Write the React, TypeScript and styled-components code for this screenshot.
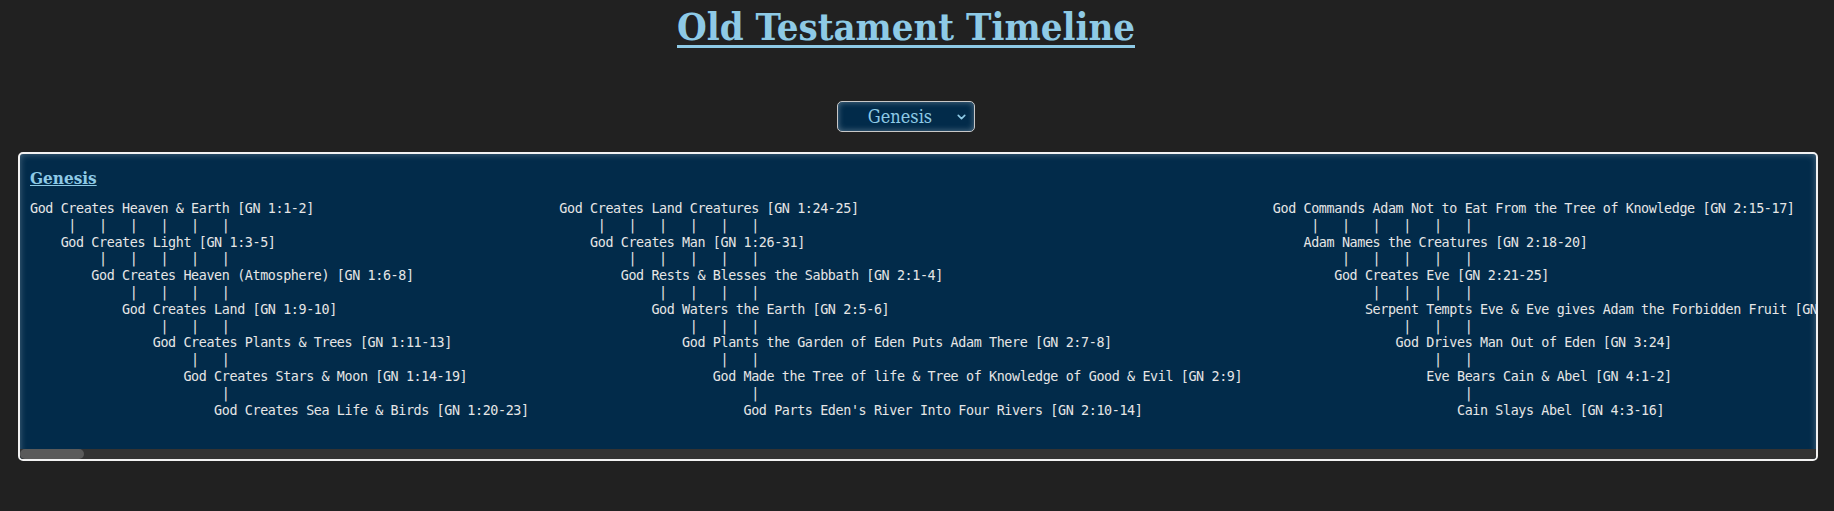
import styled, { createGlobalStyle } from 'styled-components'
import { ChevronDown } from 'lucide-react'

const GlobalStyle = createGlobalStyle`
  body {
    margin: 0;
    background: #212121;
  }
`

const books = ['Genesis', 'Exodus', 'Leviticus', 'Numbers', 'Deuteronomy']

// each column is one branch of the timeline, read top-down
const columns: string[][] = [
  [
    'God Creates Heaven & Earth [GN 1:1-2]',
    'God Creates Light [GN 1:3-5]',
    'God Creates Heaven (Atmosphere) [GN 1:6-8]',
    'God Creates Land [GN 1:9-10]',
    'God Creates Plants & Trees [GN 1:11-13]',
    'God Creates Stars & Moon [GN 1:14-19]',
    'God Creates Sea Life & Birds [GN 1:20-23]',
  ],
  [
    'God Creates Land Creatures [GN 1:24-25]',
    'God Creates Man [GN 1:26-31]',
    'God Rests & Blesses the Sabbath [GN 2:1-4]',
    'God Waters the Earth [GN 2:5-6]',
    'God Plants the Garden of Eden Puts Adam There [GN 2:7-8]',
    'God Made the Tree of life & Tree of Knowledge of Good & Evil [GN 2:9]',
    "God Parts Eden's River Into Four Rivers [GN 2:10-14]",
  ],
  [
    'God Commands Adam Not to Eat From the Tree of Knowledge [GN 2:15-17]',
    'Adam Names the Creatures [GN 2:18-20]',
    'God Creates Eve [GN 2:21-25]',
    'Serpent Tempts Eve & Eve gives Adam the Forbidden Fruit [GN 3:1-7]',
    'God Drives Man Out of Eden [GN 3:24]',
    'Eve Bears Cain & Abel [GN 4:1-2]',
    'Cain Slays Abel [GN 4:3-16]',
  ],
  [
    'Seth Is Born [GN 4:25-26]',
    'Generations From Adam to Noah [GN 5:1-32]',
    'God Sees the Wickedness of Man [GN 6:1-7]',
    'Noah Finds Grace [GN 6:8-10]',
    'God Commands Noah to Build the Ark [GN 6:11-22]',
    'The Flood [GN 7:1-24]',
    'The Waters Recede [GN 8:1-19]',
  ],
]

const visibleShare = 1 / 28

const STEP = 4

const buildLines = (events: string[]) => {
  const lines: string[] = []
  events.forEach((event, i) => {
    lines.push(' '.repeat(i * STEP) + event)
    const left = events.length - 1 - i
    if (left > 0) {
      lines.push(' '.repeat(i * STEP + 5) + Array(left).fill('|').join('   '))
    }
  })
  return lines
}

export default function App() {
  return (
    <>
      <GlobalStyle />
      <Header>
        <Title>Old Testament Timeline</Title>
        <Picker>
          <BookSelect defaultValue="Genesis">
            {books.map(book => (
              <option key={book}>{book}</option>
            ))}
          </BookSelect>
          <Chevron size={13} strokeWidth={3} />
        </Picker>
      </Header>
      <Panel>
        <Viewport>
          <BookHeading>Genesis</BookHeading>
          <Track>
            {columns.map((events, i) => (
              <Column key={i}>
                {buildLines(events).map((line, j) => (
                  <Line key={j}>{line}</Line>
                ))}
              </Column>
            ))}
          </Track>
        </Viewport>
        <ScrollBar>
          <Thumb style={{ width: `${visibleShare * 100}%` }} />
        </ScrollBar>
      </Panel>
    </>
  )
}

const serif = "'DejaVu Serif Condensed', 'DejaVu Serif', serif"

const Header = styled.header`
  display: flex;
  flex-direction: column;
  align-items: center;
  padding-right: 22px;
`

const Title = styled.h1`
  margin: 0;
  padding-top: 4px;
  font-family: ${serif};
  font-size: 38px;
  line-height: 45px;
  font-weight: bold;
  color: #8ecae6;
  text-decoration: underline;
  text-decoration-thickness: 3px;
  text-underline-offset: 5px;
`

const Picker = styled.div`
  position: relative;
  width: 138px;
  height: 31px;
  margin-top: 52px;
`

const BookSelect = styled.select`
  appearance: none;
  width: 100%;
  height: 100%;
  padding: 0 12px 0 0;
  border: 1px solid #c8c8c8;
  border-radius: 5px;
  background: #022b4a;
  box-shadow: inset 0 0 6px rgba(255, 255, 255, 0.35);
  color: #8ecae6;
  font-family: ${serif};
  font-size: 18px;
  text-align: center;
  text-align-last: center;
  outline: none;
`

const Chevron = styled(ChevronDown)`
  position: absolute;
  right: 7px;
  top: 50%;
  transform: translateY(-50%);
  color: #8ecae6;
  pointer-events: none;
`

const Panel = styled.div`
  display: flex;
  flex-direction: column;
  margin: 20px 16px 0 18px;
  border: 2px solid #f2f2f2;
  border-radius: 5px;
  background: #022b4a;
  box-shadow: inset 0 0 7px rgba(255, 255, 255, 0.3);
  overflow: hidden;
`

const Viewport = styled.div`
  padding: 14px 10px 30px;
  overflow: hidden;
`

const BookHeading = styled.h2`
  margin: 0 0 12px;
  font-family: ${serif};
  font-size: 17px;
  line-height: 21px;
  font-weight: bold;
  color: #8ecae6;
  text-decoration: underline;
`

const Track = styled.div`
  display: flex;
  gap: 30.7px;
`

const Column = styled.div`
  display: flex;
  flex-direction: column;
  flex-shrink: 0;
`

const Line = styled.div`
  font-family: 'DejaVu Sans Mono', monospace;
  font-size: 13.4px;
  letter-spacing: -0.39px;
  line-height: 16.8px;
  white-space: pre;
  color: #e6e6e6;
`

const ScrollBar = styled.div`
  display: flex;
  height: 10px;
  background: #333333;
`

const Thumb = styled.div`
  height: 100%;
  border-radius: 5px;
  background: #5a5a5a;
`
